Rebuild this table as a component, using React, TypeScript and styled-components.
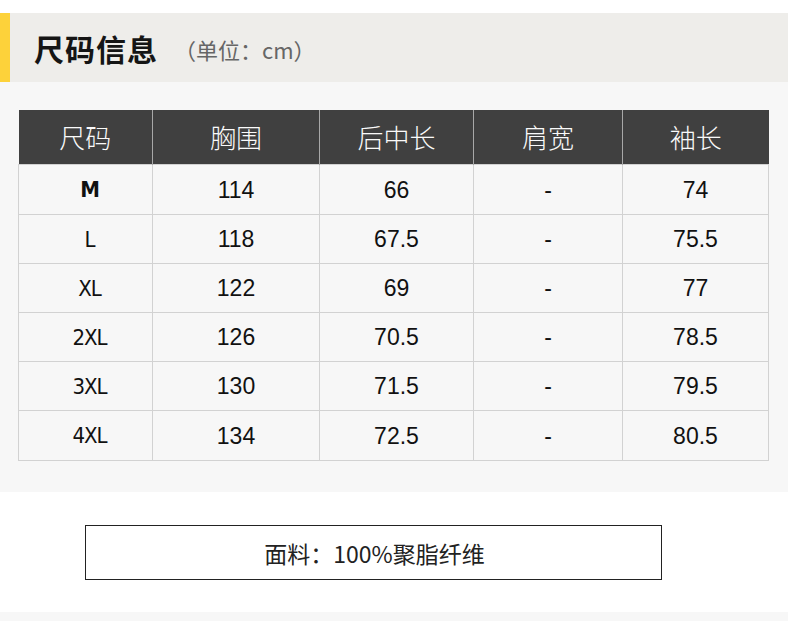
import React from "react";
import styled, { createGlobalStyle } from "styled-components";

const Global = createGlobalStyle`
  html, body { margin: 0; padding: 0; background: #ffffff; }
  body { font-family: "Liberation Sans", "Noto Sans CJK SC", sans-serif; }
`;

const Page = styled.div`
  width: 788px;
  padding-top: 13px;
`;

const Header = styled.div`
  height: 69px;
  background: #eeedea;
  border-left: 10px solid #fdd23a;
  display: flex;
  align-items: center;
  padding-left: 24px;
  box-sizing: border-box;
`;

const Title = styled.h1`
  margin: 0;
  font-family: "Noto Sans CJK SC", sans-serif;
  font-weight: 700;
  font-size: 30px;
  color: #151515;
  letter-spacing: 1px;
`;

const Unit = styled.span`
  margin-left: 16px;
  font-family: "Noto Sans CJK SC", sans-serif;
  font-size: 22px;
  color: #666;
  padding-top: 3px;
`;

const TableSection = styled.div`
  background: #f7f7f7;
  height: 410px;
  box-sizing: border-box;
  padding: 28px 0 0 18px;
`;

const Table = styled.table`
  border-collapse: collapse;
  width: 750px;
  table-layout: fixed;
`;

const HeadCell = styled.th`
  background: #404040;
  color: #fafafa;
  height: 54px;
  padding: 0;
  line-height: 30px;
  font-family: "Noto Sans CJK SC", sans-serif;
  font-weight: 300;
  font-size: 26px;
  text-align: center;
  border-left: 1px solid #a8a8a8;
  &:first-child { border-left: none; }
`;

const Cell = styled.td<{ $h: number }>`
  height: ${(p) => p.$h - 1}px;
  padding: 0;
  line-height: 24px;
  text-align: center;
  border: 1px solid #d2d2d2;
  color: #111;
  font-family: "Liberation Sans", sans-serif;
  font-size: 23px;
`;

const SizeLabel = styled.span<{ $bold?: boolean }>`
  display: inline-block;
  margin-left: 8px;
  font-family: "DejaVu Sans", "Liberation Sans", sans-serif;
  font-stretch: condensed;
  font-size: 22px;
  font-weight: ${(p) => (p.$bold ? 700 : 400)};
  letter-spacing: -1px;
`;

const FabricSection = styled.div`
  height: 120px;
  background: #ffffff;
  box-sizing: border-box;
  padding: 33px 0 0 85px;
`;

const FabricBox = styled.div`
  width: 577px;
  height: 55px;
  box-sizing: border-box;
  border: 1px solid #222;
  display: flex;
  align-items: center;
  justify-content: center;
  padding-left: 2px;
  font-family: "Noto Sans CJK SC", sans-serif;
  font-size: 23px;
  color: #222;
`;

const Footer = styled.div`
  height: 9px;
  background: #f7f7f7;
`;

const cols = [134, 167, 154, 149, 146];
const heads = ["尺码", "胸围", "后中长", "肩宽", "袖长"];
const rows = [
  ["M", "114", "66", "-", "74"],
  ["L", "118", "67.5", "-", "75.5"],
  ["XL", "122", "69", "-", "77"],
  ["2XL", "126", "70.5", "-", "78.5"],
  ["3XL", "130", "71.5", "-", "79.5"],
  ["4XL", "134", "72.5", "-", "80.5"],
];
const heights = [50, 49, 49, 49, 49, 50];

export default function App() {
  return (
    <>
      <Global />
      <Page>
        <Header>
          <Title>尺码信息</Title>
          <Unit>（单位：cm）</Unit>
        </Header>
        <TableSection>
          <Table>
            <colgroup>
              {cols.map((w, i) => (
                <col key={i} style={{ width: w }} />
              ))}
            </colgroup>
            <thead>
              <tr>
                {heads.map((h) => (
                  <HeadCell key={h}>{h}</HeadCell>
                ))}
              </tr>
            </thead>
            <tbody>
              {rows.map((r, ri) => (
                <tr key={ri}>
                  {r.map((v, ci) => (
                    <Cell key={ci} $h={heights[ri]}>
                      {ci === 0 ? <SizeLabel $bold={v === "M"}>{v}</SizeLabel> : v}
                    </Cell>
                  ))}
                </tr>
              ))}
            </tbody>
          </Table>
        </TableSection>
        <FabricSection>
          <FabricBox>面料：100%聚脂纤维</FabricBox>
        </FabricSection>
        <Footer />
      </Page>
    </>
  );
}
